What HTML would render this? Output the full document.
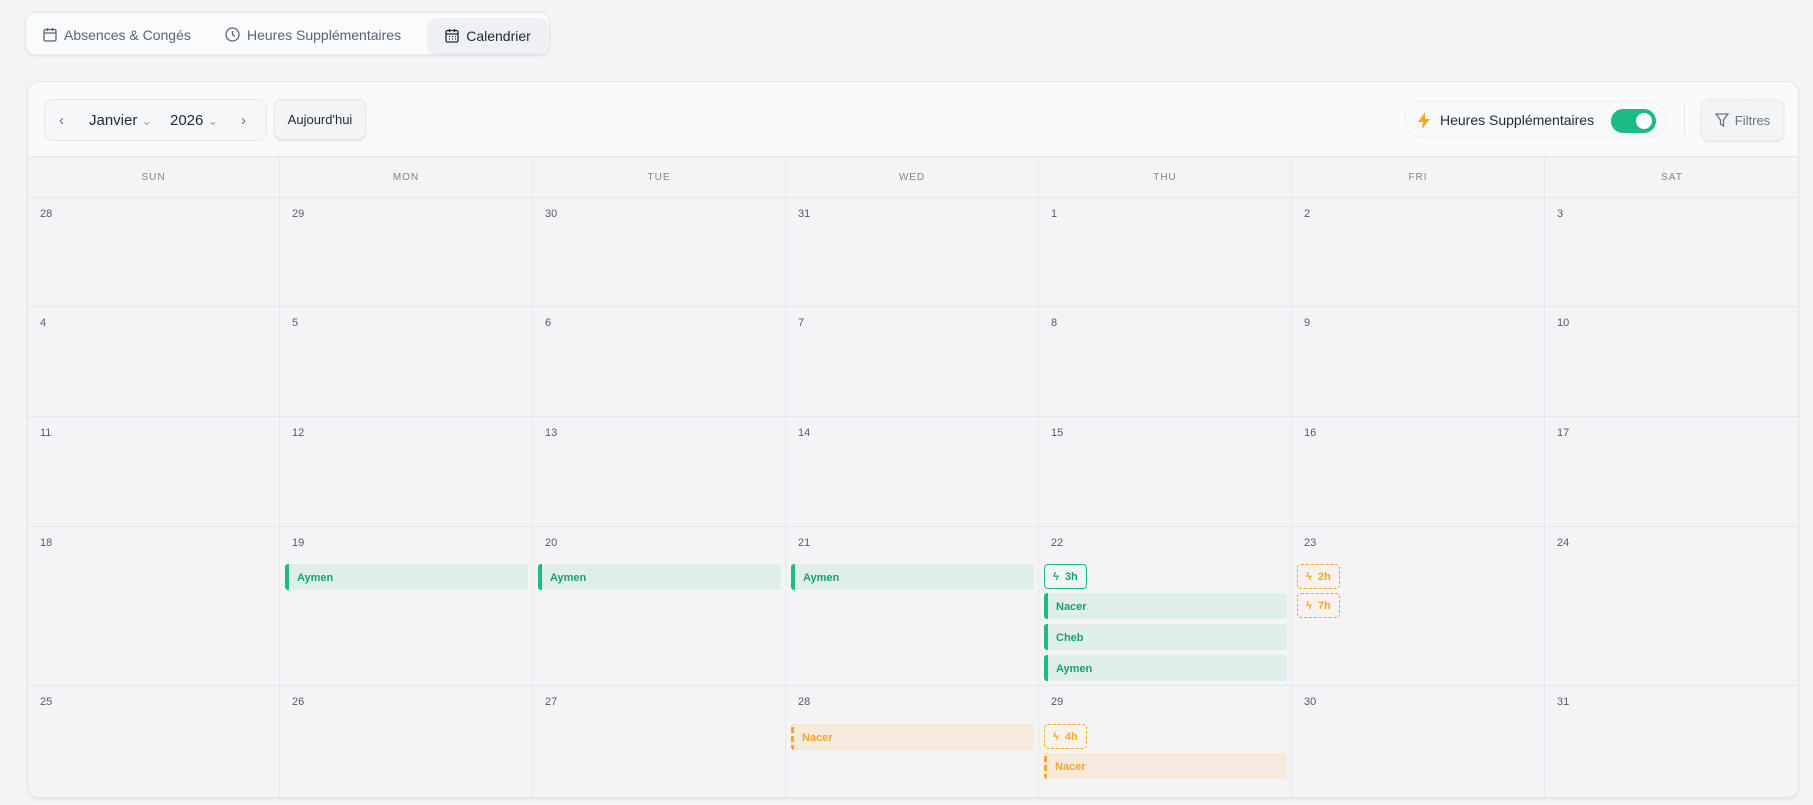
<!DOCTYPE html>
<html><head><meta charset="utf-8"><style>
*{box-sizing:border-box;margin:0;padding:0}
body{width:1813px;height:805px;background:#f3f4f6;font-family:"Liberation Sans",sans-serif;position:relative;overflow:hidden;color:#334155}
.tabs{position:absolute;left:25px;top:12px;width:525px;height:43px;background:#fafbfc;border:1px solid #e5e7eb;border-radius:10px;box-shadow:0 1px 3px rgba(0,0,0,.08)}
.tab{position:absolute;top:0;height:43px;display:flex;align-items:center;gap:7px;font-size:14px;color:#5b6472}
.tab.act{top:5px;height:35px;left:402px;width:120px;background:#eef0f3;border-radius:8px;color:#1f2937;justify-content:center;box-shadow:0 1px 2px rgba(0,0,0,.08)}
.card{position:absolute;left:27px;top:81px;width:1772px;height:717px;background:#f4f4f6;border:1px solid #e3e6ea;border-radius:12px;overflow:hidden;box-shadow:0 2px 3px rgba(0,0,0,.06)}
.bar{position:absolute;left:0;top:0;width:100%;height:75px;background:#f9fafb;border-bottom:1px solid #e2e8f0}
.nav{position:absolute;left:16px;top:17px;width:223px;height:42px;border:1px solid #e5e7eb;border-radius:10px;background:#f6f7f9;font-size:15px;color:#1f2937}
.nav span{position:absolute;top:12px}
.btn{position:absolute;border:1px solid #e5e7eb;border-radius:8px;background:#f3f4f6;box-shadow:0 1px 2px rgba(0,0,0,.1);display:flex;align-items:center;justify-content:center;font-size:13px}
.pill{position:absolute;left:1376px;top:19px;width:263px;height:37px;border:1px solid #eceef1;border-radius:19px;background:#f8f9fa;font-size:14px;color:#1f2937}
.tog{position:absolute;left:206px;top:7px;width:45px;height:24px;border-radius:12px;background:#1dbb84}
.tog:after{content:"";position:absolute;right:4px;top:4px;width:16px;height:16px;border-radius:50%;background:#fff}
.hdr{position:absolute;top:75px;height:41px;font-size:10px;letter-spacing:1px;color:#7a8494;display:flex;align-items:center;justify-content:center;border-right:1px solid #e2e8f0;border-bottom:1px solid #e2e8f0;background:#f4f4f5}
.cell{position:absolute;border-right:1px solid #e2e8f0;border-bottom:1px solid #e2e8f0}
.d{position:absolute;left:12px;top:10px;font-size:11px;color:#525c6b}
.ev{position:absolute;left:5px;right:4px;height:26px;background:#dfeeea;border-left:4px solid #1dbb84;border-radius:3px;font-size:11px;font-weight:bold;color:#17a173;padding:8px 0 0 8px}
.ev.o{background:#f5eadb;border-left:3px dashed #f5a623;color:#f5a623}
.bd{position:absolute;left:5px;width:43px;height:25px;border:1px solid #1dbb84;border-radius:4px;font-size:11px;font-weight:bold;color:#17a173;padding:6px 0 0 8px;background:#f1f6f4}
.bd.o{border:1px dashed #f5a623;color:#f5a623;background:#f6f3ee}
</style></head><body>
<div class="tabs">
 <div class="tab" style="left:17px"><svg width="14" height="15" viewBox="0 0 14 15" fill="none" stroke="#5b6472" stroke-width="1.3"><rect x="1" y="2.5" width="12" height="11.5" rx="1.5"/><path d="M1 6h12M4.5 1v3M9.5 1v3"/></svg>Absences &amp; Congés</div>
 <div class="tab" style="left:199px"><svg width="15" height="15" viewBox="0 0 15 15" fill="none" stroke="#5b6472" stroke-width="1.3"><circle cx="7.5" cy="7.5" r="6.5"/><path d="M7.5 4v3.7l2.2 1.6"/></svg>Heures Supplémentaires</div>
 <div class="tab act"><svg width="14" height="15" viewBox="0 0 14 15" fill="none" stroke="#1f2937" stroke-width="1.3"><rect x="1" y="2.5" width="12" height="11.5" rx="1.5"/><path d="M1 6h12M4.5 1v3M9.5 1v3M4 8.5h1M7 8.5h1M10 8.5h1M4 11h1M7 11h1M10 11h1"/></svg>Calendrier</div>
</div>
<div class="card">
 <div class="bar">
  <div class="nav"><span style="left:14px;color:#6b7280">‹</span><span style="left:44px">Janvier <small style="color:#9ca3af">⌄</small></span><span style="left:125px">2026 <small style="color:#9ca3af">⌄</small></span><span style="left:196px;color:#6b7280">›</span></div>
  <div class="btn" style="left:246px;top:17px;width:92px;height:41px;color:#1f2937">Aujourd'hui</div>
  <div class="pill"><svg style="position:absolute;left:12px;top:10px" width="14" height="17" viewBox="0 0 14 17"><path d="M8 0L1 10h5l-1 7 8-10H8z" fill="#f5a623"/></svg><span style="position:absolute;left:35px;top:10px">Heures Supplémentaires</span><div class="tog"></div></div>
  <div style="position:absolute;left:1656px;top:21px;width:1px;height:32px;background:#e5e7eb"></div>
  <div class="btn" style="left:1673px;top:17px;width:83px;height:42px;color:#6b7280;gap:6px;border-style:dashed"><svg width="14" height="14" viewBox="0 0 14 14" fill="none" stroke="#6b7280" stroke-width="1.3"><path d="M1 1h12L8.5 7v6L5.5 11V7z"/></svg>Filtres</div>
 </div>
 <div class="hdr" style="left:0;width:252px">SUN</div><div class="hdr" style="left:252px;width:253px">MON</div><div class="hdr" style="left:505px;width:253px">TUE</div><div class="hdr" style="left:758px;width:253px">WED</div><div class="hdr" style="left:1011px;width:253px">THU</div><div class="hdr" style="left:1264px;width:253px">FRI</div><div class="hdr" style="left:1517px;width:255px">SAT</div>
 <div id="g"></div>
</div>
<script>
var rows=[[116,109],[225,110],[335,110],[445,159],[604,113]];
var nums=[[28,29,30,31,1,2,3],[4,5,6,7,8,9,10],[11,12,13,14,15,16,17],[18,19,20,21,22,23,24],[25,26,27,28,29,30,31]];
var xs=[0,252,505,758,1011,1264,1517,1772];
var h="";
for(var r=0;r<5;r++)for(var c=0;c<7;c++){
 var t=rows[r][0],ht=rows[r][1],inner="";
 if(r==3&&c>=1&&c<=3)inner='<div class="ev" style="top:37px">Aymen</div>';
 if(r==3&&c==4)inner='<div class="bd" style="top:37px">ϟ&nbsp; 3h</div><div class="ev" style="top:66px">Nacer</div><div class="ev" style="top:97px">Cheb</div><div class="ev" style="top:128px">Aymen</div>';
 if(r==3&&c==5)inner='<div class="bd o" style="top:37px">ϟ&nbsp; 2h</div><div class="bd o" style="top:66px">ϟ&nbsp; 7h</div>';
 if(r==4&&c==3)inner='<div class="ev o" style="top:38px">Nacer</div>';
 if(r==4&&c==4)inner='<div class="bd o" style="top:38px">ϟ&nbsp; 4h</div><div class="ev o" style="top:67px">Nacer</div>';
 h+='<div class="cell" style="left:'+xs[c]+'px;top:'+t+'px;width:'+(xs[c+1]-xs[c])+'px;height:'+ht+'px"><div class="d">'+nums[r][c]+'</div>'+inner+'</div>';
}
document.getElementById("g").innerHTML=h;
</script>
</body></html>
